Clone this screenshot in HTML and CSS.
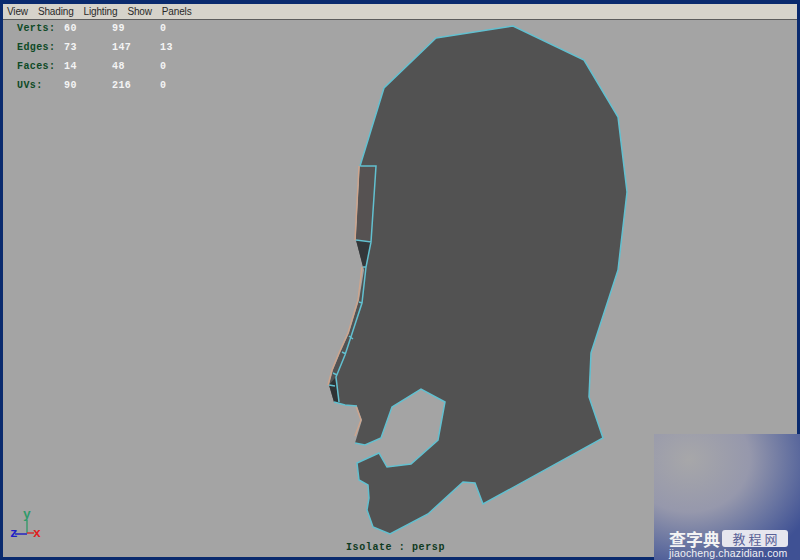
FILE: index.html
```html
<!DOCTYPE html>
<html lang="en">
<head>
<meta charset="utf-8">
<title>Isolate : persp</title>
<link rel="stylesheet" href="styles.css">
</head>
<body>
<div class="frame">
  <nav class="menu">
    <span>View</span><span>Shading</span><span>Lighting</span><span>Show</span><span>Panels</span>
  </nav>
  <main class="viewport">
    <svg class="model" viewBox="0 0 800 560" width="800" height="560" aria-hidden="true">
      <path class="face" fill-rule="evenodd" d="M436 38 513 26 584 60 618 117 627 192 618 270 591 353 589 397 603 438 483 504 475 483 463 482 428 514 390 534 373 527 367 510 369 498 368 485 359 480 357 463 379 453 387 467 411 464 438 440 445 402 421 389 392 407 381 438 365 445 355 443 362 420 357 406 345 405 334 402 329 385 333 370 340 353 349 333 359 300 364 270 356 240 360 166 384 88Z"/>
      <path class="strip" d="M360 166H376L371 242 356 240Z"/>
      <path class="dark" d="M356 240 371 242 366 267 363 267Z"/>
      <path class="dark2" d="M329 385 335 378 339 402 334 402Z"/>
      <path class="orange" d="M360 166 356 240M363 267 359 300 349 333 340 353 333 370 329 385M357 406 362 420 356 436"/>
      <path class="cyan" d="M436 38 513 26 584 60 618 117 627 192 618 270 591 353 589 397 603 438 483 504 475 483 463 482 428 514 390 534 373 527 367 510 369 498 368 485 359 480 357 463 379 453 387 467 411 464 438 440 445 402 421 389 392 407 381 438 365 445 355 443M334 402 345 405 357 406M360 166 384 88 436 38M360 166H376L371 242 356 240M371 242 366 267 362 303 345 355 336 377 339 402M363 267H366M359 302 362 303M349 336 353 339M342 352 346 354M333 373 337 375M329 385 335 386"/>
    </svg>
    <div class="stats">
      <span class="label">Verts:</span><span>60</span><span>99</span><span>0</span>
      <span class="label">Edges:</span><span>73</span><span>147</span><span>13</span>
      <span class="label">Faces:</span><span>14</span><span>48</span><span>0</span>
      <span class="label">UVs:</span><span>90</span><span>216</span><span>0</span>
    </div>
    <svg class="axis" viewBox="0 -10 40 44" width="40" height="44" aria-hidden="true">
      <path class="axis-y" d="M18 10V23"/>
      <path class="axis-x" d="M18 23H25"/>
      <path class="axis-z" d="M6 24H18"/>
      <text class="t-y" x="14" y="8">y</text>
      <text class="t-x" x="24" y="27">x</text>
      <text class="t-z" x="1" y="27">z</text>
    </svg>
    <div class="caption">Isolate : persp</div>
  </main>
  <aside class="mark">
    <div class="mark-row">
      <span class="mark-name">查字典</span>
      <span class="mark-pill">教 程 网</span>
    </div>
    <div class="mark-url">jiaocheng.chazidian.com</div>
  </aside>
</div>
</body>
</html>
```
FILE: styles.css
```css
* { box-sizing: border-box; }
html, body { margin: 0; padding: 0; }
body { width: 800px; height: 560px; overflow: hidden; background: #0a246a; }
.frame {
  position: relative;
  width: 800px;
  height: 560px;
  padding: 4px 3px 3px 3px;
  display: flex;
  flex-direction: column;
  background: #0a2a6e;
}
.menu {
  flex: none;
  height: 16px;
  display: flex;
  align-items: center;
  gap: 10px;
  padding: 1px 0 0 4px;
  background: #d6d3cb;
  border-bottom: 1px solid #5c5c5c;
  color: #2a2a2a;
  font: 10px/14px "Liberation Sans", sans-serif;
  letter-spacing: -0.15px;
}
.viewport {
  position: relative;
  flex: 1;
  background: #a4a4a4;
}
.model { position: absolute; left: -3px; top: -20px; }
.face { fill: #525252; }
.strip { fill: #565252; }
.dark { fill: #33373a; }
.dark2 { fill: #2e3234; }
.orange { fill: none; stroke: #cfa58c; stroke-width: 1.4; transform: translate(-1px, 0); }
.cyan { fill: none; stroke: #62c0d0; stroke-width: 1.5; }
.stats {
  position: absolute;
  left: 14px;
  top: -1px;
  display: grid;
  grid-template-columns: 47px 48px 48px 20px;
  grid-auto-rows: 19px;
  align-items: center;
  color: #f4f4f4;
  font: bold 10px/19px "Liberation Mono", monospace;
  letter-spacing: 0.4px;
}
.label { color: #0e4a26; }
.axis { position: absolute; left: 6px; top: 480px; }
.axis text { font: bold 13px "Liberation Mono", monospace; }
.axis-y { stroke: #3f9a6e; stroke-width: 1.5; fill: none; }
.axis-x { stroke: #d03030; stroke-width: 1.5; fill: none; }
.axis-z { stroke: #2525c0; stroke-width: 1.5; fill: none; }
.t-y { fill: #2f9a6a; }
.t-x { fill: #e02020; }
.t-z { fill: #1e1ec8; }
.caption {
  position: absolute;
  left: 343px;
  top: 521px;
  color: #0e3a1e;
  font: bold 10px/14px "Liberation Mono", monospace;
  letter-spacing: 0.6px;
  white-space: pre;
}
.mark {
  position: absolute;
  left: 654px;
  top: 434px;
  width: 146px;
  height: 126px;
  padding: 96px 0 0 15px;
  background: radial-gradient(ellipse 135px 118px at 35px 25px, #a7a7a9 0%, #9698ac 45%, #6672a0 75%, #3f5194 100%);
}
.mark-row { display: flex; align-items: center; gap: 2px; height: 17px; }
.mark-name {
  color: #f4f4f4;
  font: bold 17px/17px "Noto Sans CJK SC", sans-serif;
  white-space: nowrap;
}
.mark-pill {
  width: 66px;
  height: 17px;
  border-radius: 3px;
  background: #e6e6ee;
  color: #5a6298;
  text-align: center;
  font: 13px/17px "Noto Sans CJK SC", sans-serif;
}
.mark-url {
  margin-top: 1px;
  color: #f0f0f4;
  font: 10.5px/11px "Liberation Sans", sans-serif;
  letter-spacing: 0.15px;
  white-space: nowrap;
}
```
